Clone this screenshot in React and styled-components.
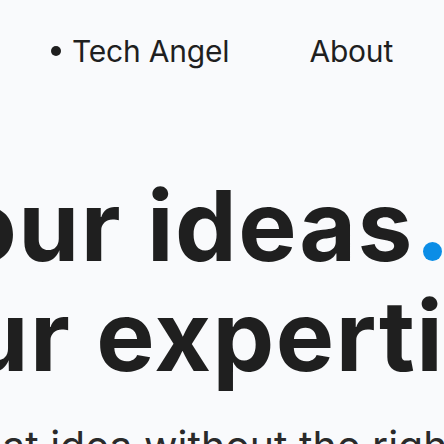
import styled, { createGlobalStyle } from 'styled-components';

const GlobalStyle = createGlobalStyle`
  html, body {
    margin: 0;
    padding: 0;
    background: #f9fafc;
  }
  body {
    font-family: Inter, "Noto Sans", sans-serif;
    color: #1f1f1f;
    overflow: hidden;
  }
`;

const Page = styled.div`
  width: 444px;
  height: 444px;
  overflow: hidden;
`;

const Nav = styled.nav`
  display: flex;
  justify-content: center;
  align-items: center;
  gap: 80px;
  padding-top: 33px;
  font-size: 30px;
  font-weight: 400;
  letter-spacing: -0.2px;
`;

const Brand = styled.div`
  display: flex;
  align-items: center;
  gap: 11px;
`;

const Bullet = styled.span`
  width: 10px;
  height: 10px;
  border-radius: 50%;
  background: #1f1f1f;
`;

const NavLink = styled.a`
  color: inherit;
  text-decoration: none;
`;

const Hero = styled.section`
  margin-top: 102px;
  display: flex;
  flex-direction: column;
`;

const Line = styled.div`
  white-space: nowrap;
  font-size: ${(p) => p.$size}px;
  font-weight: ${(p) => p.$weight};
  line-height: ${(p) => p.$lh};
  letter-spacing: ${(p) => p.$track}px;
  margin-left: ${(p) => p.$shift}px;
  margin-top: ${(p) => p.$gap || 0}px;
  color: ${(p) => p.$color || '#1f1f1f'};
`;

const Dot = styled.span`
  display: inline-block;
  width: 19px;
  height: 19px;
  margin-left: 9px;
  border-radius: 50%;
  background: #0b8de6;
`;

export default function App() {
  return (
    <Page>
      <GlobalStyle />
      <Nav>
        <Brand>
          <Bullet />
          <span>Tech Angel</span>
        </Brand>
        <NavLink href="#about">About</NavLink>
      </Nav>
      <Hero>
        <Line $size={98} $weight={700} $lh="110px" $track={1.5} $shift={-102}>
          your ideas<Dot />
        </Line>
        <Line $size={98} $weight={700} $lh="110px" $track={1.5} $shift={-94}>
          our expertise.
        </Line>
        <Line $size={41} $weight={400} $lh="48px" $track={0} $shift={-62} $gap={31} $color="#2a2a2a">
          great idea without the right team
        </Line>
      </Hero>
    </Page>
  );
}
